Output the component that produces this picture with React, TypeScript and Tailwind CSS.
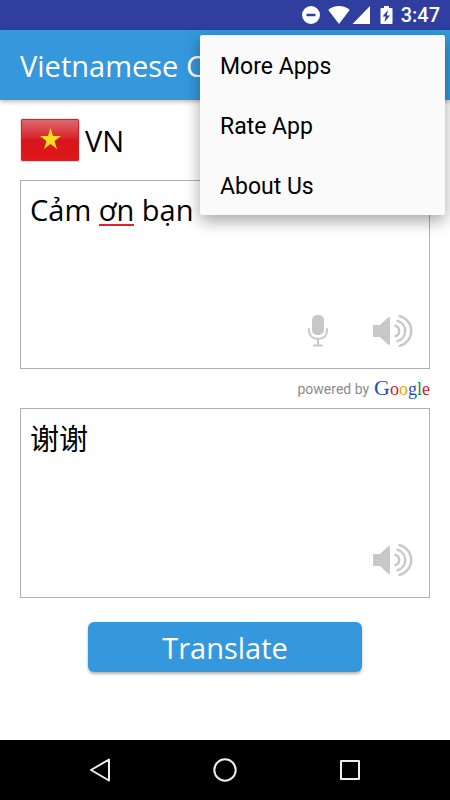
import React, { useState } from "react";

const menuItems = ["More Apps", "Rate App", "About Us"];

const googleLetters = [
  { letter: "G", color: "text-[22px] text-[#1f4fc4]" },
  { letter: "o", color: "text-[#cf2027]" },
  { letter: "o", color: "text-[#e8a80c]" },
  { letter: "g", color: "text-[#1f4fc4]" },
  { letter: "l", color: "text-[#11943a]" },
  { letter: "e", color: "text-[#cf2027]" },
];

function StatusBar() {
  return (
    <div className="flex h-[30px] items-center justify-end bg-[#303f9f] pr-[10px] text-white">
      <svg className="h-5 w-[94px]" viewBox="0 0 94 20" fill="currentColor">
        <path
          fillRule="evenodd"
          d="M11 1a9 9 0 1 0 0 18 9 9 0 0 0 0-18zM6.500 8.700h9v2.600h-9z"
        />
        <path d="M28.300 5C31 2.500 35 1 39 1s8 1.500 10.700 4L39 19z" />
        <path d="M70 1v18H52.500z" />
        <path
          fillRule="evenodd"
          d="M84 1h5v2h2.500c.600 0 1 .400 1 1v14c0 .600-.400 1-1 1h-10c-.600 0-1-.400-1-1V4c0-.600.400-1 1-1H84zM88 5l-5.500 6.500h3.200L84.500 17l5.500-6.500h-3.200z"
        />
      </svg>
      <span className="ml-[7px] font-['Roboto',sans-serif] text-xl leading-[30px] font-medium">
        3:47
      </span>
    </div>
  );
}

function Flag() {
  return (
    <svg className="h-11 w-15" viewBox="0 0 60 44" role="img" aria-label="Vietnam">
      <defs>
        <linearGradient id="flag-red" x1="0" y1="0" x2="0" y2="1">
          <stop offset="0" stopColor="#dc6a70" />
          <stop offset="0.45" stopColor="#d8262b" />
          <stop offset="0.5" stopColor="#d4161b" />
          <stop offset="1" stopColor="#e3161a" />
        </linearGradient>
      </defs>
      <rect x="0.5" y="0.500" width="59" height="43" rx="1.500" fill="#e9b9ba" />
      <rect x="1.500" y="1.500" width="57" height="41" rx="1" fill="url(#flag-red)" stroke="#c9272c" />
      <path
        d="M30.500 10l2.500 8H41l-6.500 5 2.500 8-6.500-4.900L24 31l2.500-8-6.500-5h8z"
        fill="#fbdc1c"
      />
    </svg>
  );
}

function MicIcon() {
  return (
    <svg className="h-8 w-5" viewBox="0 0 20 32" fill="none" stroke="#c8c8c8" strokeWidth="2">
      <rect x="4" y="0" width="12" height="20" rx="5" fill="#c8c8c8" stroke="none" />
      <path d="M1 14v1.500C1 20.500 4.500 24 10 24s9-3.500 9-8.500V14" strokeLinecap="round" />
      <path d="M10 24v6M6 30.500h8" strokeLinecap="round" />
    </svg>
  );
}

function SpeakerIcon() {
  return (
    <svg className="h-8 w-10" viewBox="0 0 40 32" fill="none" stroke="#c8c8c8" strokeWidth="2">
      <path
        d="M0 10h7l8-7.500c1-.800 2-.500 2 1v25c0 1.500-1 1.800-2 1L7 22H0z"
        fill="#c8c8c8"
        stroke="none"
      />
      <g strokeLinecap="round" strokeWidth="2.400">
        <path d="M22.500 10.800a5.500 5.500 0 0 1 0 10.400" />
        <path d="M24.500 5.800a10.600 10.600 0 0 1 0 20.400" />
        <path d="M26.500 1.200a15.200 15.200 0 0 1 0 29.600" />
      </g>
    </svg>
  );
}

function OverflowMenu() {
  return (
    <div
      role="menu"
      className="absolute top-[35px] right-[5px] z-10 flex w-[245px] flex-col rounded-xs bg-[#fafafa] shadow-[0_6px_16px_rgba(0,0,0,0.35)]"
    >
      {menuItems.map((item) => (
        <button
          key={item}
          role="menuitem"
          className="h-[60px] px-5 pt-1 text-left font-['Roboto',sans-serif] text-[23px] text-black"
        >
          {item}
        </button>
      ))}
    </div>
  );
}

function NavBar() {
  return (
    <nav className="flex h-[60px] items-center justify-center gap-[85px] bg-black text-[#eeeeee]">
      <button aria-label="Back" className="flex w-10 justify-center">
        <svg className="h-6 w-6" viewBox="0 0 24 24" fill="none" stroke="currentColor" strokeWidth="2" strokeLinejoin="round">
          <path d="M21 1.500v21L3 12z" />
        </svg>
      </button>
      <button aria-label="Home" className="flex w-10 justify-center">
        <svg className="h-6 w-6" viewBox="0 0 24 24" fill="none" stroke="currentColor" strokeWidth="2">
          <circle cx="12" cy="12" r="10.700" />
        </svg>
      </button>
      <button aria-label="Recent apps" className="flex w-10 justify-center">
        <svg className="h-6 w-6" viewBox="0 0 24 24" fill="none" stroke="currentColor" strokeWidth="2" strokeLinejoin="round">
          <rect x="3" y="3" width="18" height="18" />
        </svg>
      </button>
    </nav>
  );
}

export default function App() {
  const [source, setSource] = useState("Cảm ơn bạn");

  return (
    <div className="relative flex min-h-screen flex-col bg-white font-['Open_Sans','Noto_Sans_CJK_SC',sans-serif] text-black">
      <StatusBar />
      <header className="flex h-[70px] items-center bg-[#3598dc] px-5 shadow-[0_2px_4px_rgba(0,0,0,0.25)]">
        <h1 className="pt-[2px] text-[29px] whitespace-nowrap text-white">Vietnamese C</h1>
      </header>
      <OverflowMenu />

      <main className="flex flex-1 flex-col px-5 pt-[18px]">
        <div className="flex h-[62px] items-start gap-[5px]">
          <Flag />
          <label htmlFor="source" className="pt-px text-[29px] leading-[44px]">
            VN
          </label>
        </div>

        <div className="relative flex h-[189px] flex-col border border-[#b0b0b0]">
          <textarea
            id="source"
            spellCheck={false}
            value={source}
            onChange={(e) => setSource(e.target.value)}
            className="w-full flex-1 resize-none px-[9px] pt-[9px] text-[29px] leading-10 outline-none"
          />
          {source === "Cảm ơn bạn" && (
            <span className="absolute top-[43px] left-[78px] h-[2px] w-[35px] bg-[#d9232e]" />
          )}
          <div className="flex justify-end gap-[45px] pr-4 pb-[21px]">
            <button aria-label="Speak">
              <MicIcon />
            </button>
            <button aria-label="Listen">
              <SpeakerIcon />
            </button>
          </div>
        </div>

        <div className="flex h-[39px] items-center justify-end gap-[5px]">
          <span className="font-['Roboto',sans-serif] text-sm text-[#8c8c8c]">powered by</span>
          <span className="font-['Liberation_Serif',serif] text-lg leading-6">
            {googleLetters.map((g, i) => (
              <span key={i} className={g.color}>
                {g.letter}
              </span>
            ))}
          </span>
        </div>

        <div className="flex h-[190px] flex-col border border-[#b0b0b0]">
          <textarea
            readOnly
            aria-label="Translation"
            value="谢谢"
            className="w-full flex-1 resize-none px-[9px] pt-[10px] text-[29px] leading-10 outline-none"
          />
          <div className="flex justify-end pr-4 pb-[21px]">
            <button aria-label="Listen to translation">
              <SpeakerIcon />
            </button>
          </div>
        </div>

        <button className="mx-auto mt-6 h-[50px] w-[67%] rounded-md bg-[#3598dc] pt-[2px] text-[29px] text-white shadow-[0_2px_3px_rgba(0,0,0,0.3)]">
          Translate
        </button>
      </main>

      <NavBar />
    </div>
  );
}
